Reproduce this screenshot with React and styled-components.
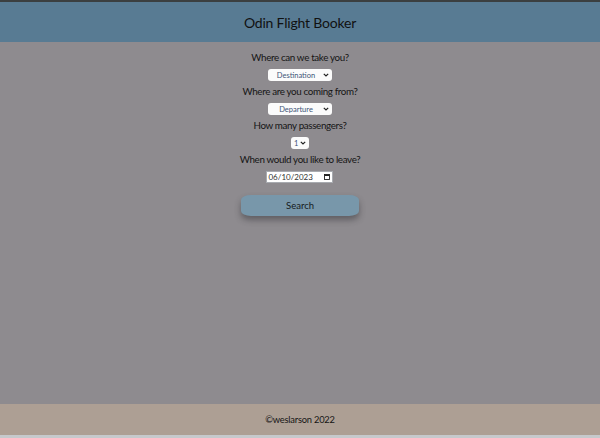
import React from "react";
import styled, { createGlobalStyle } from "styled-components";

const Global = createGlobalStyle`
  html, body { margin: 0; padding: 0; }
  body { font-family: "Lato", "Noto Sans", sans-serif; color: #141414; }
  #root { min-height: 438px; }
`;

const Page = styled.div`
  display: flex;
  flex-direction: column;
  height: 438px;
  border-top: 2px solid #3b3f40;
  box-sizing: border-box;
  background: #c6c9cc;
`;

const Header = styled.header`
  height: 40px;
  background: #587b93;
  display: flex;
  align-items: center;
  justify-content: center;
`;

const Title = styled.h1`
  margin: 0;
  font-size: 14px;
  font-weight: 400;
  letter-spacing: -0.2px;
  color: #111;
`;

const Main = styled.main`
  flex: 1;
  background: #8e8b8f;
  display: flex;
  flex-direction: column;
  align-items: center;
  padding-top: 8px;
`;

const Field = styled.div`
  display: flex;
  flex-direction: column;
  align-items: center;
  gap: 5px;
  margin-bottom: 3px;
`;

const Label = styled.label`
  font-size: 9.8px;
  letter-spacing: -0.35px;
  line-height: 14px;
  color: #151515;
`;

const SelectWrap = styled.span`
  position: relative;
  display: inline-flex;
  width: ${(p) => p.$w}px;
  height: 12px;
`;

const Select = styled.select`
  appearance: none;
  -webkit-appearance: none;
  width: 100%;
  height: 100%;
  box-sizing: border-box;
  font-size: 7.5px;
  font-family: "Lato", sans-serif;
  color: #3d5577;
  background: #fbfbfb;
  border: none;
  border-radius: 3px;
  padding: 0 ${(p) => (p.$small ? 9 : 10)}px 0 ${(p) => (p.$small ? 3 : 2)}px;
  text-align: center;
  text-align-last: ${(p) => (p.$small ? "left" : "center")};
  outline: none;
`;

const Chevron = styled.svg`
  position: absolute;
  right: 3px;
  top: 4px;
  width: 6px;
  height: 4px;
  pointer-events: none;
`;

const DateWrap = styled.span`
  position: relative;
  display: inline-flex;
  width: 67px;
  height: 12px;
`;

const DateText = styled.input`
  width: 100%;
  height: 100%;
  box-sizing: border-box;
  font-size: 8px;
  font-family: "Lato", sans-serif;
  color: #333;
  background: #fff;
  border: 1px solid #a8abb0;
  border-radius: 0;
  padding: 0 0 0 1px;
  outline: none;
`;

const CalIcon = styled.svg`
  position: absolute;
  right: 3px;
  top: 3px;
  width: 6px;
  height: 6px;
`;

const Button = styled.button`
  margin-top: 9px;
  width: 118px;
  height: 21px;
  background: #7897aa;
  border: none;
  border-radius: 10px / 5px;
  box-shadow: 0 4px 6px rgba(40, 40, 45, 0.45);
  font-family: "Lato", sans-serif;
  font-size: 9.5px;
  color: #151a20;
`;

const Footer = styled.footer`
  height: 31px;
  background: #ad9f94;
  display: flex;
  align-items: center;
  justify-content: center;
  font-size: 9.3px;
  letter-spacing: -0.2px;
  color: #151515;
`;

const Bottom = styled.div`
  height: 3px;
  background: #c6c9cc;
`;

function ChevronIcon() {
  return (
    <Chevron viewBox="0 0 6 4">
      <path d="M0.8 0.8 L3 3 L5.2 0.8" fill="none" stroke="#222" strokeWidth="1.2" />
    </Chevron>
  );
}

export default function App() {
  return (
    <>
      <Global />
      <Page>
        <Header>
          <Title>Odin Flight Booker</Title>
        </Header>
        <Main>
          <Field>
            <Label>Where can we take you?</Label>
            <SelectWrap $w={64}>
              <Select defaultValue="">
                <option value="">Destination</option>
              </Select>
              <ChevronIcon />
            </SelectWrap>
          </Field>
          <Field>
            <Label>Where are you coming from?</Label>
            <SelectWrap $w={64}>
              <Select defaultValue="">
                <option value="">Departure</option>
              </Select>
              <ChevronIcon />
            </SelectWrap>
          </Field>
          <Field>
            <Label>How many passengers?</Label>
            <SelectWrap $w={18}>
              <Select $small defaultValue="1">
                <option value="1">1</option>
              </Select>
              <ChevronIcon />
            </SelectWrap>
          </Field>
          <Field>
            <Label>When would you like to leave?</Label>
            <DateWrap>
              <DateText type="text" readOnly defaultValue="06/10/2023" />
              <CalIcon viewBox="0 0 6 6">
                <rect x="0.5" y="0.5" width="5" height="5" fill="none" stroke="#222" strokeWidth="0.9" />
                <rect x="0.5" y="0.5" width="5" height="1.5" fill="#222" />
              </CalIcon>
            </DateWrap>
          </Field>
          <Button>Search</Button>
        </Main>
        <Footer>©weslarson 2022</Footer>
        <Bottom />
      </Page>
    </>
  );
}
